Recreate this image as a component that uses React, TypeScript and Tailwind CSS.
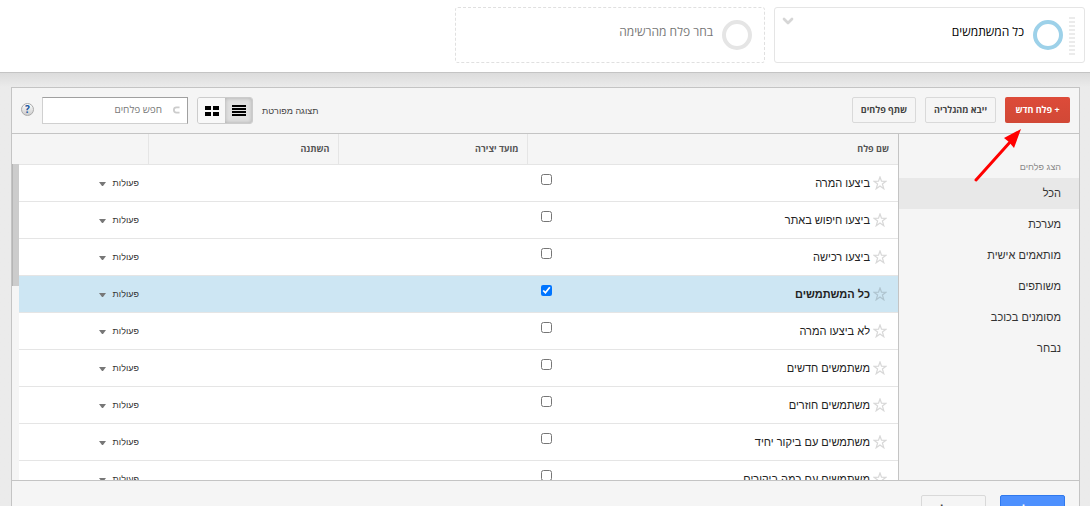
import { useState } from 'react';
import { ChevronDown } from 'lucide-react';

const SEGMENTS = [
  'ביצעו המרה',
  'ביצעו חיפוש באתר',
  'ביצעו רכישה',
  'כל המשתמשים',
  'לא ביצעו המרה',
  'משתמשים חדשים',
  'משתמשים חוזרים',
  'משתמשים עם ביקור יחיד',
  'משתמשים עם כמה ביקורים',
];

const FILTERS = ['הכל', 'מערכת', 'מותאמים אישית', 'משותפים', 'מסומנים בכוכב', 'נבחר'];

function SegmentCards() {
  return (
    <header className="flex gap-[9px] border-b border-[#c4c4c4] bg-white px-[5px] pt-[7px] pb-[9px]">
      <div className="flex h-14 w-[311px] rounded-[3px] border border-[#e5e5e5] px-[9px]">
        <div className="mt-[9px] flex h-[38px] w-1.5 flex-col justify-between">
          {Array.from({ length: 10 }, (_, i) => (
            <span key={i} className="h-0.5 bg-[#ebebeb]" />
          ))}
        </div>
        <span className="mt-3 mr-1.5 size-[30px] rounded-full border-4 border-[#9dd1e9]" />
        <h2 className="mt-3.5 mr-[9px] flex-1 text-[12px] leading-5 text-black">כל המשתמשים</h2>
        <button type="button" aria-label="אפשרויות" className="mt-[5px] -ml-1 size-4 text-[#d6d6d6]">
          <ChevronDown className="size-4" strokeWidth={4} />
        </button>
      </div>
      <div className="flex h-14 w-[310px] rounded-[3px] border border-dashed border-[#e0e0e0] px-3">
        <span className="mt-3 size-[30px] rounded-full border-4 border-[#e5e5e5]" />
        <h2 className="mt-3.5 mr-[9px] text-[12px] leading-5 text-[#777]">בחר פלח מהרשימה</h2>
      </div>
    </header>
  );
}

function Toolbar() {
  const button =
    'h-[26px] rounded-[2px] border border-[#d9d9d9] bg-[#f5f5f5] text-[9px] font-bold text-[#444]';
  return (
    <div className="flex h-[46px] items-start border-b border-[#c4c4c4] px-[9px] pt-[9px]">
      <button
        type="button"
        className="h-[26px] w-[65px] rounded-[2px] bg-linear-to-b from-[#dd4b39] to-[#d14836] text-[9px] font-bold text-white"
      >
        + פלח חדש
      </button>
      <button type="button" className={`${button} mr-[9px] w-[71px] whitespace-nowrap`}>
        ייבא מהגלריה
      </button>
      <button type="button" className={`${button} mr-[9px] w-16 whitespace-nowrap`}>
        שתף פלחים
      </button>
      <span className="mr-auto font-['Liberation_Sans',sans-serif] text-[9px] leading-7 text-[#444]">
        תצוגה מפורטת
      </span>
      <div className="mr-[9px] flex h-[27px] w-14 overflow-hidden rounded-[3px] border border-[#ccc]">
        <button
          type="button"
          aria-label="רשימה"
          className="flex flex-1 items-center justify-center bg-[#e0e0e0] shadow-[inset_0_0_4px_#aaa]"
        >
          <svg className="h-[11px] w-[14px]" viewBox="0 0 14 11" shapeRendering="crispEdges">
            <path d="M0 0h14v2H0zM0 3h14v2H0zM0 6h14v2H0zM0 9h14v2H0z" />
          </svg>
        </button>
        <button type="button" aria-label="רשת" className="flex flex-1 items-center justify-center bg-[#f8f8f8]">
          <svg className="h-[10px] w-[14px]" viewBox="0 0 14 10" shapeRendering="crispEdges">
            <path d="M0 0h6v4H0zM8 0h6v4H8zM0 6h6v4H0zM8 6h6v4H8z" />
          </svg>
        </button>
      </div>
      <label className="mr-[9px] flex h-[27px] w-[146px] items-center border border-[#d0d0d0] border-t-[#a0a0a0] border-r-[#a0a0a0] bg-white pr-[7px] pb-0.5">
        <svg className="size-2" viewBox="0 0 8 8" fill="none" stroke="#ccc" strokeWidth="2">
          <path d="M7.5 1H4C0 1 0 7 4 7H7.5" />
        </svg>
        <input
          type="text"
          aria-label="חפש פלחים"
          placeholder="חפש פלחים"
          className="mr-[11px] w-full text-[10px] text-[#333] outline-none placeholder:text-[#777]"
        />
      </label>
      <button
        type="button"
        aria-label="עזרה"
        className="mt-1.5 mr-2 size-[13px] rounded-full border border-[#aaa] bg-linear-to-b from-white to-[#ccc] text-center text-[10px] leading-[11px] font-bold text-[#15539e]"
      >
        ?
      </button>
    </div>
  );
}

function SegmentTable() {
  const [selected, setSelected] = useState(['כל המשתמשים']);

  const toggle = (name: string) =>
    setSelected((prev) => (prev.includes(name) ? prev.filter((n) => n !== name) : [...prev, name]));

  const head = 'h-[30px] text-right font-bold';
  return (
    <div className="relative h-[346px] flex-1 overflow-hidden border-r border-[#c4c4c4] bg-white">
      <table className="w-full table-fixed border-collapse">
        <thead>
          <tr className="border-b border-[#e5e5e5] bg-[#f5f5f5] text-[9px] text-[#555]">
            <th className={`${head} pr-[9px]`}>שם פלח</th>
            <th className={`${head} w-[189px] border-r border-[#e5e5e5] pr-2`}>מועד יצירה</th>
            <th className={`${head} w-[190px] border-r border-[#e5e5e5] pr-2`}>השתנה</th>
            <th className={`${head} w-[136px] border-r border-[#e5e5e5] pr-2`} />
          </tr>
        </thead>
        <tbody>
          {SEGMENTS.map((name, i) => {
            const checked = selected.includes(name);
            return (
              <tr
                key={name}
                className={`h-[37px] border-b border-[#e5e5e5] font-['Liberation_Sans',sans-serif] text-[#222] ${checked ? 'bg-[#cde6f3] font-bold' : ''}`}
              >
                <td className="p-0">
                  <div className="flex items-center pr-[11px] pl-3.5">
                    <button
                      type="button"
                      aria-label="סמן בכוכב"
                      className={checked ? 'text-[#afc4cf]' : 'text-[#d8d8d8]'}
                    >
                      <svg className="size-[14px]" viewBox="0 0 14 14" fill="none" stroke="currentColor" strokeWidth="1.2">
                        <path d="M7 1L8.5 5.2L13 5.3L9.4 8L10.8 12.8L7 10.1L3.2 12.8L4.6 8L1 5.3L5.5 5.2Z" />
                      </svg>
                    </button>
                    <label htmlFor={`segment-${i}`} className="mr-[3px] flex-1 text-[11px] leading-5">
                      {name}
                    </label>
                    <input
                      id={`segment-${i}`}
                      type="checkbox"
                      checked={checked}
                      onChange={() => toggle(name)}
                      className="mb-1.5 size-[11px]"
                    />
                  </div>
                </td>
                <td />
                <td />
                <td className="p-0 pt-0.5 pr-[9px]">
                  <button type="button" className="flex items-center gap-[7px] text-[9px] font-normal text-[#333]">
                    פעולות
                    <svg className="h-1 w-[7px]" viewBox="0 0 7 4" fill="#777">
                      <path d="M0 0H7L4 4H3Z" />
                    </svg>
                  </button>
                </td>
              </tr>
            );
          })}
        </tbody>
      </table>
      <div className="absolute top-[30px] bottom-0 left-0 w-[7px] bg-[#f5f5f5]">
        <div className="h-[122px] border-l border-[#b5b5b5] bg-[#ccc]" />
      </div>
    </div>
  );
}

function Sidebar() {
  return (
    <nav className="w-[180px] pt-[22px] font-['Liberation_Sans',sans-serif] text-[#333]">
      <h3 className="h-[22px] pr-[18px] text-[9px] leading-[22px] text-[#888]">הצג פלחים</h3>
      <ul>
        {FILTERS.map((filter, i) => (
          <li key={filter}>
            <a
              href="#"
              className={`block h-[31px] pr-[18px] text-[11px] leading-[30px] ${i === 0 ? 'bg-[#e8e8e8]' : ''}`}
            >
              {filter}
            </a>
          </li>
        ))}
      </ul>
    </nav>
  );
}

export default function App() {
  return (
    <div
      dir="rtl"
      className="relative h-screen overflow-hidden bg-[#ebebeb] font-['Open_Sans','Noto_Sans','DejaVu_Sans',sans-serif]"
    >
      <SegmentCards />
      <div className="bg-linear-to-b from-[#dcdcdc] to-[#ebebeb] to-[14px] px-[10px] pt-[14px]">
        <main className="ml-px border border-[#c4c4c4] bg-[#f5f5f5]">
          <Toolbar />
          <div className="flex">
            <Sidebar />
            <SegmentTable />
          </div>
          <footer className="flex gap-3.5 border-t border-[#c4c4c4] p-3.5">
            <button
              type="button"
              className="h-7 w-[65px] rounded-[2px] border border-[#3079ed] bg-[#4d90fe] text-[11px] font-bold text-white"
            >
              החל
            </button>
            <button
              type="button"
              className="h-7 w-[65px] rounded-[2px] border border-[#d9d9d9] bg-[#f5f5f5] text-[11px] font-bold text-[#444]"
            >
              ביטול
            </button>
          </footer>
        </main>
      </div>
      <svg className="absolute top-[128px] right-[68px] h-[54px] w-12" viewBox="0 0 48 54">
        <path d="M2 52L37 13" stroke="#f00" strokeWidth="3" strokeLinecap="round" />
        <path d="M47 1L30 10L35 14L40 20Z" fill="#f00" />
      </svg>
    </div>
  );
}
